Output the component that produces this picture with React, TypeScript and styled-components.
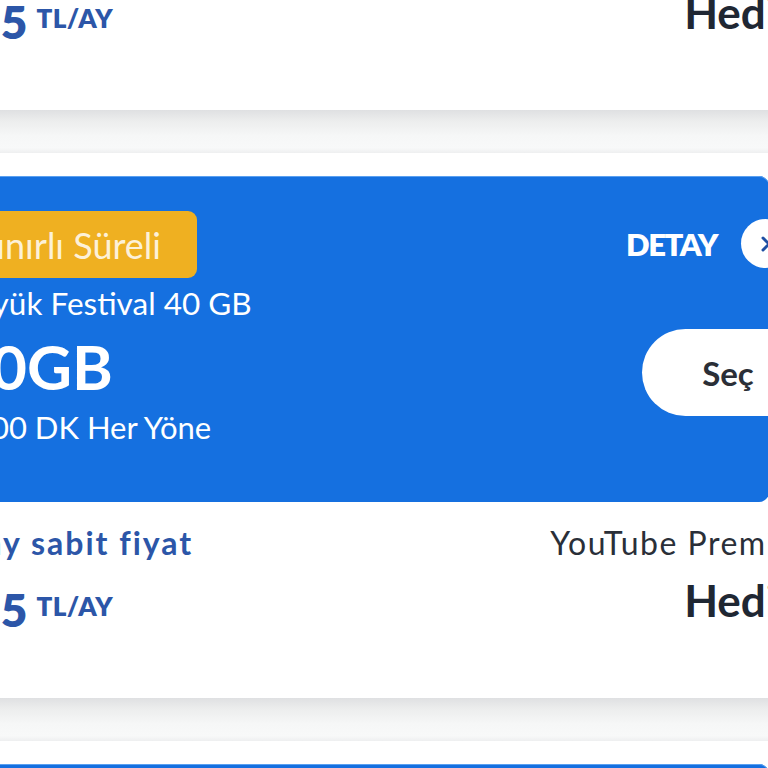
import * as React from "react"
import styled, { createGlobalStyle } from "styled-components"

const GlobalStyle = createGlobalStyle`
  html, body {
    margin: 0;
    padding: 0;
    background: #f5f6f7;
  }
  body {
    font-family: Lato, "Noto Sans", sans-serif;
  }
`

interface Plan {
  badge?: string
  name?: string
  data?: string
  minutes?: string
  perk: string
  price: string
  gift: string
  extra: string
  showPanel: boolean
}

const plans: Plan[] = [
  {
    perk: "6 ay sabit fiyat",
    price: "75",
    gift: "Hediye",
    extra: "YouTube Premium",
    showPanel: false,
  },
  {
    badge: "Sınırlı Süreli",
    name: "Büyük Festival 40 GB",
    data: "40GB",
    minutes: "1000 DK Her Yöne",
    perk: "6 ay sabit fiyat",
    price: "75",
    gift: "Hediye",
    extra: "YouTube Premium",
    showPanel: true,
  },
  {
    perk: "6 ay sabit fiyat",
    price: "75",
    gift: "Hediye",
    extra: "YouTube Premium",
    showPanel: true,
  },
]

const ChevronRight = () => (
  <svg width="14" height="18" viewBox="0 0 14 18" fill="none">
    <path d="M4 3l6 6-6 6" stroke="#1f4fa3" strokeWidth="3" strokeLinecap="round" strokeLinejoin="round" />
  </svg>
)

const PlanCard = ({ plan, first }: { plan: Plan; first: boolean }) => (
  <Card first={first}>
    {plan.showPanel && (
      <Panel>
        <PanelLeft>
          <Badge>{plan.badge}</Badge>
          <PlanName>{plan.name}</PlanName>
          <DataAmount>{plan.data}</DataAmount>
          <Minutes>{plan.minutes}</Minutes>
        </PanelLeft>
        <PanelRight>
          <DetailRow>
            <DetailLabel>DETAY</DetailLabel>
            <DetailCircle>
              <ChevronRight />
            </DetailCircle>
          </DetailRow>
          <SelectButton>Seç</SelectButton>
        </PanelRight>
      </Panel>
    )}
    <Footer>
      <FooterRow>
        <Perk>{plan.perk}</Perk>
        <Extra>{plan.extra}</Extra>
      </FooterRow>
      <FooterRow>
        <Price>
          <PriceValue>{plan.price}</PriceValue>
          <PriceUnit>TL/AY</PriceUnit>
        </Price>
        <Gift>{plan.gift}</Gift>
      </FooterRow>
    </Footer>
  </Card>
)

export default function App() {
  return (
    <Viewport>
      <GlobalStyle />
      <Stage>
        {plans.map((plan, i) => (
          <React.Fragment key={i}>
            {i > 0 && <Gap />}
            <PlanCard plan={plan} first={i === 0} />
          </React.Fragment>
        ))}
      </Stage>
    </Viewport>
  )
}

const Viewport = styled.div`
  width: 768px;
  height: 768px;
  overflow: hidden;
  background: #f5f6f7;
`

const Stage = styled.div`
  width: 916px;
  margin-left: -69px;
  display: flex;
  flex-direction: column;
`

const Gap = styled.div`
  height: 43px;
  background: linear-gradient(#dfe0e2 0%, #eceded 25%, #f6f7f7 60%, #f8f9f9 88%, #eeeff0 100%);
`

const Card = styled.div<{ first: boolean }>`
  background: #ffffff;
  padding: ${props => (props.first ? "0" : "23px")} 24px 0;
  margin-top: ${props => (props.first ? "-86px" : "0")};
`

const Panel = styled.div`
  display: flex;
  justify-content: space-between;
  height: 326px;
  box-sizing: border-box;
  margin: 0 54px 0 -24px;
  padding: 35px 0 0 24px;
  background: #1570e0;
  border-radius: 10px;
  box-shadow: inset 0 1px 0 #5aa0f0;
`

const PanelLeft = styled.div`
  display: flex;
  flex-direction: column;
  align-items: flex-start;
  color: #ffffff;
`

const Badge = styled.div`
  height: 67px;
  box-sizing: border-box;
  padding: 0 36px 0 22px;
  display: flex;
  align-items: center;
  background: #efb021;
  border-radius: 9px;
  color: #fdf1d8;
  font-size: 36px;
`

const PlanName = styled.div`
  margin-top: 6px;
  font-size: 31.5px;
  line-height: 38px;
`

const DataAmount = styled.div`
  margin-top: 13px;
  font-size: 62px;
  font-weight: 700;
  line-height: 62px;
`

const Minutes = styled.div`
  margin-top: 11px;
  font-size: 31px;
  line-height: 38px;
`

const PanelRight = styled.div`
  display: flex;
  flex-direction: column;
  align-items: flex-end;
  margin-right: -45px;
  padding-top: 8px;
`

const DetailRow = styled.div`
  display: flex;
  align-items: center;
  gap: 24px;
  margin-right: 24px;
`

const DetailLabel = styled.span`
  color: #ffffff;
  font-size: 31px;
  font-weight: 800;
  letter-spacing: -1.5px;
`

const DetailCircle = styled.div`
  width: 49px;
  height: 49px;
  border-radius: 50%;
  background: #ffffff;
  display: flex;
  align-items: center;
  justify-content: center;
`

const SelectButton = styled.div`
  margin-top: 61px;
  width: 172px;
  height: 87px;
  border-radius: 44px;
  background: #ffffff;
  display: flex;
  align-items: center;
  justify-content: center;
  color: #2b2f37;
  font-size: 33px;
  font-weight: 700;
`

const Footer = styled.div`
  height: 196px;
  box-sizing: border-box;
  padding-top: 21px;
  display: flex;
  flex-direction: column;
  gap: 21px;
`

const FooterRow = styled.div`
  display: flex;
  justify-content: space-between;
  align-items: flex-start;
`

const Perk = styled.span`
  color: #2c56a8;
  font-size: 32px;
  font-weight: 700;
  letter-spacing: 2px;
  line-height: 40px;
`

const Extra = styled.span`
  color: #2a2f38;
  font-size: 32px;
  letter-spacing: 1.5px;
  line-height: 40px;
`

const Price = styled.div`
  display: flex;
  align-items: flex-start;
  gap: 6px;
  margin: 3px 0 0 16px;
  color: #2c56a8;
  font-weight: 800;
`

const PriceValue = styled.span`
  font-size: 46px;
  line-height: 46px;
  letter-spacing: 3px;
`

const PriceUnit = styled.span`
  margin-top: 6px;
  font-size: 26px;
  line-height: 26px;
  letter-spacing: 0.5px;
`

const Gift = styled.span`
  margin-top: -6px;
  color: #1f2733;
  font-size: 44px;
  font-weight: 700;
  line-height: 44px;
`
